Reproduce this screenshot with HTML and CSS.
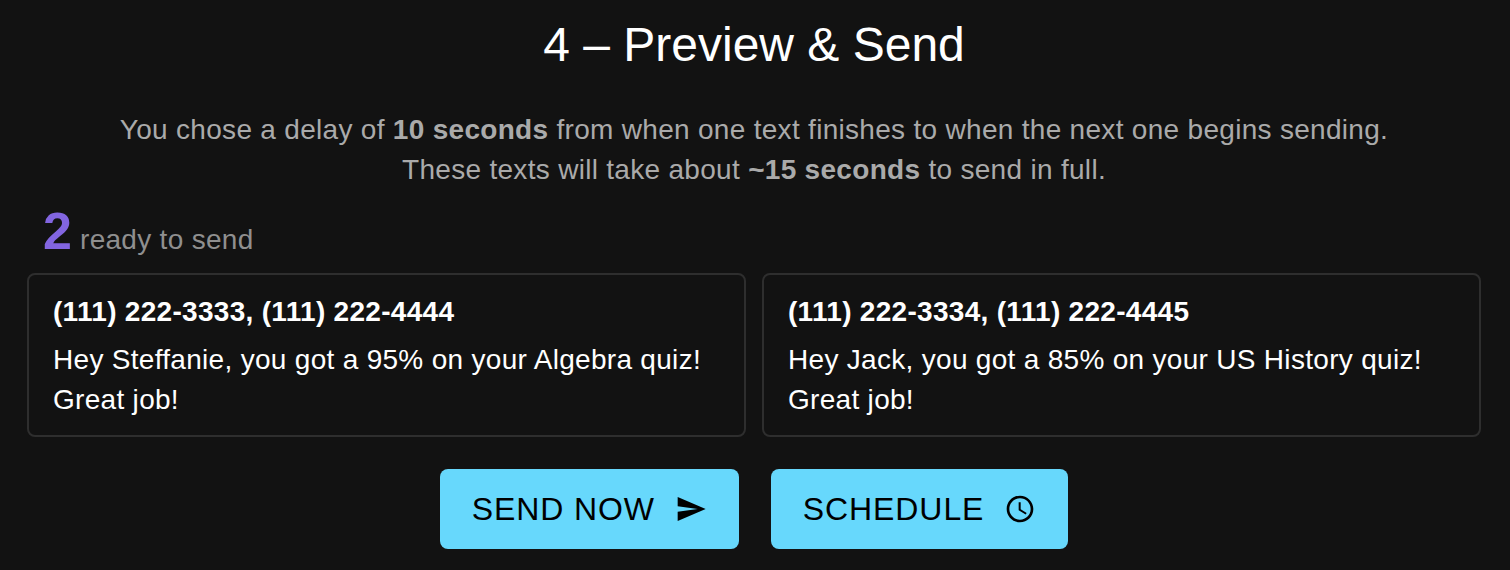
FILE: index.html
```html
<!DOCTYPE html>
<html lang="en">
<head>
    <meta charset="UTF-8">
    <meta name="viewport" content="width=device-width, initial-scale=1.0">
    <title>Preview &amp; Send</title>
    <link rel="stylesheet" href="styles.css">
</head>
<body>
    <div class="container">
        <h1>4 – Preview &amp; Send</h1>

        <p class="summary">
            You chose a delay of <strong>10 seconds</strong> from when one text finishes to when the next one begins sending.<br>
            These texts will take about <strong>~15 seconds</strong> to send in full.
        </p>

        <div class="ready-count"><span class="count">2</span> ready to send</div>

        <div class="cards">
            <div class="card">
                <div class="card-numbers">(111) 222-3333, (111) 222-4444</div>
                <div class="card-message">Hey Steffanie, you got a 95% on your Algebra quiz! Great job!</div>
            </div>
            <div class="card">
                <div class="card-numbers">(111) 222-3334, (111) 222-4445</div>
                <div class="card-message">Hey Jack, you got a 85% on your US History quiz! Great job!</div>
            </div>
        </div>

        <div class="actions">
            <button type="button" class="action-button">
                SEND NOW
                <svg class="icon" viewBox="0 0 24 24" width="32" height="32"><path d="M2.01 21 23 12 2.01 3 2 10l15 2-15 2z"/></svg>
            </button>
            <button type="button" class="action-button">
                SCHEDULE
                <svg class="icon" viewBox="0 0 24 24" width="32" height="32"><path d="M11.99 2C6.47 2 2 6.48 2 12s4.47 10 9.99 10C17.52 22 22 17.52 22 12S17.52 2 11.99 2zM12 20c-4.42 0-8-3.58-8-8s3.58-8 8-8 8 3.58 8 8-3.58 8-8 8z"/><path d="M12.5 7H11v6l5.25 3.15.75-1.23-4.5-2.67z"/></svg>
            </button>
        </div>
    </div>
</body>
</html>
```
FILE: styles.css
```css
body {
    font-family: "Liberation Sans", Arial, sans-serif;
    margin: 0;
    background-color: #121212;
    color: #fff;
}

.container {
    height: 570px;
    padding: 0 29px 0 27px;
    box-sizing: border-box;
    overflow: hidden;
}

h1 {
    font-size: 48px;
    font-weight: 400;
    line-height: 56px;
    margin: 0;
    padding-top: 17px;
    text-align: center;
}

.summary {
    font-size: 28px;
    line-height: 40px;
    letter-spacing: 0.3px;
    color: #aaa;
    text-align: center;
    margin: 37px 0 0;
}

.ready-count {
    font-size: 28px;
    line-height: 40px;
    letter-spacing: 0.3px;
    color: #8f8f8f;
    margin: 21px 0 0 16px;
    height: 62px;
}

.count {
    font-size: 52px;
    font-weight: 700;
    color: #8265e0;
    letter-spacing: 0;
}

.cards {
    display: flex;
    gap: 16px;
}

.card {
    flex: 1;
    height: 164px;
    box-sizing: border-box;
    padding: 17px 24px;
    border: 2px solid #2e2e2e;
    border-radius: 8px;
}

.card-numbers {
    font-size: 28px;
    font-weight: 700;
    line-height: 40px;
    letter-spacing: 0.3px;
    margin-bottom: 8px;
}

.card-message {
    font-size: 28px;
    line-height: 40px;
    letter-spacing: 0.3px;
}

.actions {
    display: flex;
    justify-content: center;
    gap: 32px;
    margin-top: 32px;
}

.action-button {
    display: flex;
    align-items: center;
    gap: 20px;
    height: 80px;
    padding: 0 32px;
    border: none;
    border-radius: 8px;
    background-color: #67d8fc;
    color: #000;
    font-family: inherit;
    font-size: 32px;
    letter-spacing: 0.9px;
}
```
